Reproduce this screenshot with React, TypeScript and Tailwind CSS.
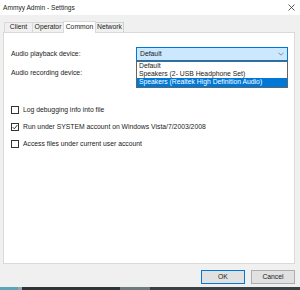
import React from "react";

const font = { fontFamily: '"Liberation Sans", Arial, sans-serif' };

function Check({ checked }: { checked?: boolean }) {
  return (
    <div className="w-[8px] h-[8px] border border-[#333333] bg-white flex items-center justify-center shrink-0">
      {checked && (
        <svg width="6" height="6" viewBox="0 0 6 6">
          <path d="M0.6 3.1 L2.3 4.8 L5.4 1.0" fill="none" stroke="#222" strokeWidth="0.9" />
        </svg>
      )}
    </div>
  );
}

export default function App() {
  return (
    <div className="w-[300px] h-[290px] bg-[#f0f0f0] flex flex-col text-[6.8px] text-[#1a1a1a] overflow-hidden" style={font}>
      <div className="h-[15px] bg-white flex items-center justify-between pl-[3px] pr-[5px] shrink-0">
        <span className="text-[6.6px] text-[#222]">Ammyy Admin - Settings</span>
        <svg width="7" height="7" viewBox="0 0 7 7">
          <path d="M0.5 0.5 L6.5 6.5 M6.5 0.5 L0.5 6.5" stroke="#333" strokeWidth="0.8" />
        </svg>
      </div>
      <div className="pl-[3px] pr-[5px] shrink-0">
        <div className="mt-[6px] h-[11px] flex items-end pl-[1px] relative z-10">
          <div className="h-[10px] px-[3px] flex items-center border border-b-0 border-[#d9d9d9] bg-[#f0f0f0] w-[29px] justify-center">Client</div>
          <div className="h-[10px] px-[3px] flex items-center border border-b-0 border-l-0 border-[#d9d9d9] bg-[#f0f0f0] w-[31px] justify-center">Operator</div>
          <div className="h-[12px] -mb-[1px] flex items-center border border-b-0 border-[#d9d9d9] bg-white w-[33px] justify-center -ml-[1px]">Common</div>
          <div className="h-[10px] flex items-center border border-b-0 border-l-0 border-[#cfcfcf] bg-[#f0f0f0] w-[28px] justify-center">Network</div>
        </div>
        <div className="h-[232px] border border-[#d9d9d9] bg-white relative">
          <div className="grid grid-cols-[125px_152px] gap-y-[5px] pl-[7px] mt-[14px]">
            <div className="h-[14px] flex items-center">Audio playback device:</div>
            <div className="h-[14px] border border-[#0078d7] bg-[#cce8ff] flex items-center justify-between pl-[3px] pr-[3px]">
              <span>Default</span>
              <svg width="6" height="4" viewBox="0 0 6 4">
                <path d="M0.5 0.7 L3 3.2 L5.5 0.7" fill="none" stroke="#777" strokeWidth="0.8" />
              </svg>
            </div>
            <div className="h-[14px] flex items-center">Audio recording device:</div>
            <div className="h-[14px] border border-[#adadad] bg-[#e5e5e5]" />
          </div>
          <div className="flex flex-col gap-[7px] pl-[7px] mt-[25px]">
            <div className="h-[10px] flex items-center gap-[4px]">
              <Check />
              <span>Log debugging info into file</span>
            </div>
            <div className="h-[10px] flex items-center gap-[4px]">
              <Check checked />
              <span>Run under SYSTEM account on Windows Vista/7/2003/2008</span>
            </div>
            <div className="h-[10px] flex items-center gap-[4px]">
              <Check />
              <span>Access files under current user account</span>
            </div>
          </div>
          <div className="absolute left-[132px] top-[28px] w-[152px] border border-[#646464] bg-white flex flex-col">
            <div className="h-[8px] flex items-center pl-[2px] leading-none">Default</div>
            <div className="h-[8px] flex items-center pl-[2px] leading-none">Speakers (2- USB Headphone Set)</div>
            <div className="h-[9px] flex items-center pl-[2px] leading-none bg-[#0078d7] text-white">Speakers (Realtek High Definition Audio)</div>
          </div>
        </div>
      </div>
      <div className="mt-[6px] flex justify-end gap-[6px] pr-[5px] shrink-0">
        <div className="w-[44px] h-[14px] border border-[#0078d7] bg-[#e1e1e1] flex items-center justify-center">OK</div>
        <div className="w-[44px] h-[14px] border border-[#adadad] bg-[#e1e1e1] flex items-center justify-center">Cancel</div>
      </div>
      <div className="flex-1" />
      <div className="h-[3px] flex shrink-0">
        <div className="w-[18px] bg-[#5aa7b3]" />
        <div className="w-[4px] bg-[#9aa3a8]" />
        <div className="flex-1 bg-[#2f3436]" />
        <div className="w-[30px] bg-[#6f7a7e]" />
        <div className="w-[150px] bg-[#3a4043]" />
      </div>
    </div>
  );
}
